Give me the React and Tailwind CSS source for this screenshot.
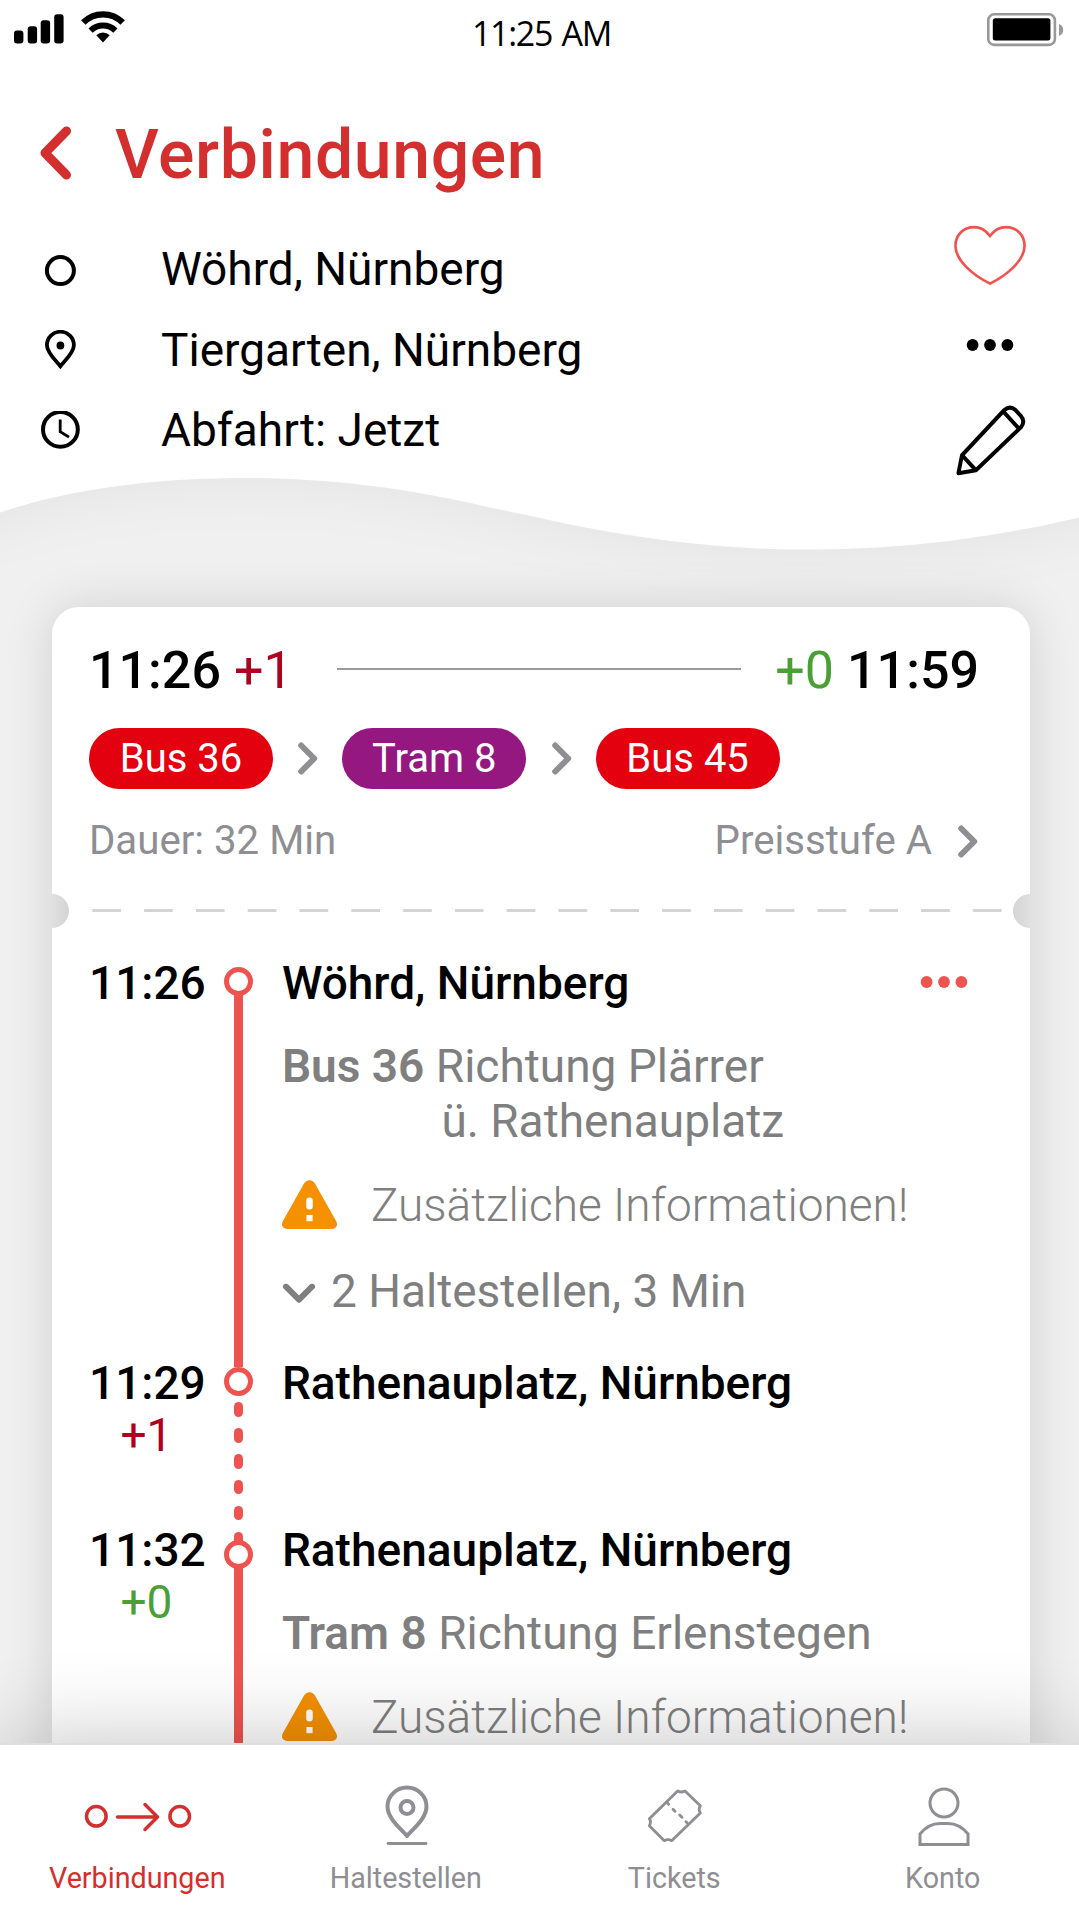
import React from 'react';

const TRIP_ROWS = [
    { id: 'from', text: 'Wöhrd, Nürnberg' },
    { id: 'to', text: 'Tiergarten, Nürnberg' },
    { id: 'time', text: 'Abfahrt: Jetzt' },
];

const LINES = [
    { name: 'Bus 36', color: 'bg-[#e3000f]' },
    { name: 'Tram 8', color: 'bg-[#951881]' },
    { name: 'Bus 45', color: 'bg-[#e3000f]' },
];

const SignalIcon = () => (
    <svg width="50" height="30" viewBox="0 0 50 30">
        <rect x="0" y="16.5" width="9.4" height="13" rx="3" />
        <rect x="13.7" y="12.3" width="9.4" height="17.2" rx="3" />
        <rect x="26.7" y="6.2" width="9.4" height="23.3" rx="3" />
        <rect x="40.2" y="0.3" width="9.4" height="29.2" rx="3" />
    </svg>
);

const WifiIcon = () => (
    <svg width="44" height="32" viewBox="0 0 44 32" fill="none" stroke="#000">
        <path d="M2.3 11.6a27.6 27.6 0 0 1 39.4 0" strokeWidth="6.4" />
        <path d="M9.6 19.6a17.6 17.6 0 0 1 24.8 0" strokeWidth="6" />
        <path d="M22 31.6l-6.7-7.3a9.4 9.4 0 0 1 13.4 0z" fill="#000" stroke="none" />
    </svg>
);

const BatteryIcon = () => (
    <svg width="77" height="34" viewBox="0 0 77 34">
        <rect x="1.3" y="1.3" width="66.6" height="30.6" rx="6" fill="none" stroke="#999" strokeWidth="2.6" />
        <rect x="5.8" y="5.2" width="57.6" height="22.2" rx="2.5" />
        <path d="M72 11c5.6 1.6 5.6 10.4 0 12z" fill="#999" />
    </svg>
);

const TripIcon = ({ id }) => (
    <svg width="40" height="40" viewBox="0 0 40 40" fill="none" stroke="#000" strokeWidth="4">
        {id === 'from' && <circle cx="20.4" cy="20.6" r="13.5" />}
        {id === 'to' && (
            <>
                <path d="M20.4 36.2C16.4 31.2 6.9 22.7 6.9 15.2a13.5 13.5 0 0 1 27 0c0 7.5-9.5 16-13.5 21z" strokeWidth="3.8" />
                <circle cx="20.4" cy="15.5" r="3.9" fill="#000" stroke="none" />
            </>
        )}
        {id === 'time' && (
            <>
                <circle cx="20.4" cy="18.4" r="17.4" />
                <path d="M20.2 8.600v12l8.800 5.500" strokeWidth="2.8" />
            </>
        )}
    </svg>
);

const HeartIcon = () => (
    <svg width="72" height="60" viewBox="0 0 74 60" preserveAspectRatio="none" fill="none" stroke="#f5504e" strokeWidth="2.7">
        <path d="M37 11C32.500 5 27 2.100 20.500 2.100 9.500 2.100 1.500 10.200 1.500 20.800 1.500 35.300 19 49.800 37 58.600 55 49.800 72.500 35.300 72.500 20.800 72.500 10.200 64.500 2.100 53.500 2.100 47 2.100 41.500 5 37 11z" />
    </svg>
);

const Dots = ({ className }) => (
    <svg className={className} width="48" height="14" viewBox="0 0 48 14" fill="currentColor">
        <circle cx="6.6" cy="7" r="5.9" />
        <circle cx="24" cy="7" r="5.9" />
        <circle cx="41.4" cy="7" r="5.9" />
    </svg>
);

const PencilIcon = () => (
    <svg width="71" height="71" viewBox="0 0 73 70" preserveAspectRatio="none" fill="none" stroke="#000" strokeWidth="4" strokeLinejoin="round">
        <path d="M3.500 67.300l3.700-17.800L50.500 5.200q6-5.400 12 0l5.200 5.500q5 5.500 0 11.300L21.500 64.300z" />
        <path d="M7.200 49.500l14.300 14.800M49.800 6.500L65 22.500" />
    </svg>
);

const Chevron = ({ className }) => (
    <svg className={className} width="20" height="33" viewBox="0 0 20 33" fill="none" stroke="currentColor" strokeWidth="6" strokeLinecap="round" strokeLinejoin="round">
        <path d="M3.200 3.500l13 13-13 13" />
    </svg>
);

const WarningIcon = () => (
    <svg width="55" height="50" viewBox="0 0 55 50">
        <path d="M27.500 0.300q3.600 0 5.600 3.500l21 37.200q2.500 5.200-1.700 7.300-1 .7-3 .7H5.600q-2 0-3-.7-4.200-2.100-1.700-7.300l21-37.200q2-3.500 5.600-3.500z" fill="#f59000" />
        <rect x="24.200" y="17.500" width="6.600" height="12" rx="3.300" fill="#fff" />
        <rect x="24.400" y="35" width="6.200" height="6.200" fill="#fff" />
    </svg>
);

const Header = () => (
    <header className="z-10 h-[476px] shrink-0 bg-white">
        <div className="grid h-[101px] grid-cols-3">
            <div className="flex items-start gap-[17px] pl-[14px] pt-[11px]">
                <div className="pt-[3px]">
                    <SignalIcon />
                </div>
                <WifiIcon />
            </div>
            <div className="pl-1 pt-4 text-center font-['Open_Sans'] text-[34px] leading-[34px] tracking-[-1.3px] [word-spacing:2px]">11:25 AM</div>
            <div className="flex items-start justify-end pr-[15px] pt-[13px]">
                <BatteryIcon />
            </div>
        </div>
        <div className="flex h-[108px] items-center pl-[39px] text-[#d32f2f]">
            <svg width="33" height="54" viewBox="0 0 33 54" className="-mt-1" fill="none" stroke="currentColor" strokeWidth="9" strokeLinecap="round" strokeLinejoin="round">
                <path d="M27.500 5L6 27l21.500 22" />
            </svg>
            <h1 className="ml-[43px] text-[68px] font-medium leading-[68px] tracking-[0.6px]">Verbindungen</h1>
        </div>
        <div className="flex justify-between pl-[40px] pr-[53px]">
            <div className="pt-[20.5px]">
                {TRIP_ROWS.map((row) => (
                    <div key={row.id} className="flex h-[80.5px] items-center">
                        <TripIcon id={row.id} />
                        <span className="ml-[81px] text-[46px]">{row.text}</span>
                    </div>
                ))}
            </div>
            <div className="flex flex-col items-center pt-4">
                <HeartIcon />
                <Dots className="mt-[53px] shrink-0" />
                <div className="mt-[53px]">
                    <PencilIcon />
                </div>
            </div>
        </div>
    </header>
);

const Wave = () => (
    <svg className="block shrink-0 overflow-visible" width="1079" height="75" viewBox="0 -0.5 1079 75">
        <path
            className="drop-shadow-[0_0_30px_rgba(0,0,0,0.06)]"
            d="M-60 -60H1139V20L1079 41C990 62 900 73 806 73 720 73 640 62 570 48 520 37 500 33 490 31 410 12 330 1.500 245 1.500 170 1.500 80 9 0 36L-60 60z"
            fill="#fff"
        />
    </svg>
);

const Summary = () => (
    <div className="px-[37px]">
        <div className="flex h-[121px] items-center pt-[6px] text-[52px]">
            <span className="w-[145px] font-medium">11:26</span>
            <span className="text-[#b00020]">+1</span>
            <div className="-mt-[3px] ml-auto mr-[34px] h-[1.5px] w-[404px] bg-[#9a9a9e]" />
            <span className="text-[#4a9f35]">+0</span>
            <span className="ml-[13px] mr-[14px] font-medium">11:59</span>
        </div>
        <div className="flex items-center">
            {LINES.map((line, i) => (
                <React.Fragment key={line.name}>
                    {i > 0 && <Chevron className="ml-[25.3px] mr-[24px] text-[#8e8e93]" />}
                    <div className={`flex h-[60.5px] w-[184px] items-center justify-center rounded-full pt-px text-[40px] text-white ${line.color}`}>
                        {line.name}
                    </div>
                </React.Fragment>
            ))}
        </div>
        <div className="flex h-[105px] items-center justify-between pt-px text-[40.2px] text-[#8e8e93]">
            <span>Dauer: 32 Min</span>
            <span className="flex items-center pr-[15px]">
                Preisstufe A
                <Chevron className="ml-[26px]" />
            </span>
        </div>
    </div>
);

const Perforation = () => (
    <div className="flex h-[34px] items-center">
        <div className="h-[34px] w-[17px] rounded-r-full bg-linear-to-r from-[#e0e0e0] to-[#d4d4d4]" />
        <svg className="flex-1" height="3" stroke="#d4d4d4" strokeWidth="3" strokeDasharray="28.7 23.1">
            <line x1="23.3" y1="1.5" x2="934" y2="1.5" />
        </svg>
        <div className="h-[34px] w-[17px] rounded-l-full bg-linear-to-l from-[#e0e0e0] to-[#d4d4d4]" />
    </div>
);

const Notice = () => (
    <div className="mt-[31px] flex h-[50px] items-center font-light">
        <WarningIcon />
        <span className="ml-[34px]">Zusätzliche Informationen!</span>
    </div>
);

const Leg = ({ time, delay, delayColor, stop, more, walk, height, shift = '', children }) => (
    <div className={`flex text-[46px] ${height}`}>
        <div className={`w-[135.2px] shrink-0 ${shift}`}>
            <div className="h-[33px] font-medium leading-[33px]">{time}</div>
            {delay && <div className={`mt-[12px] pl-[31.5px] leading-[46px] ${delayColor}`}>{delay}</div>}
        </div>
        <div className="flex w-[29px] shrink-0 flex-col items-center">
            <div className="size-[29px] shrink-0 rounded-full border-[5.5px] border-[#ef5350] bg-white" />
            {walk ? (
                <div className="flex flex-col gap-[11.4px] pt-1.5">
                    {[...Array(6)].map((_, i) => (
                        <div key={i} className="h-[14.5px] w-[9px] shrink-0 rounded-full bg-[#ef5350]" />
                    ))}
                </div>
            ) : (
                <div className="-mt-px w-[9px] flex-1 bg-[#ef5350]" />
            )}
        </div>
        <div className={`ml-[28.7px] flex-1 text-[#7f7f7f] ${shift}`}>
            <div className="flex h-[33px] items-center justify-between pr-[25px] font-medium text-black">
                {stop}
                {more && <Dots className="-mt-[4px] text-[#ef5350]" />}
            </div>
            {children}
        </div>
    </div>
);

const ConnectionCard = () => (
    <section className="ml-[52px] mt-[56px] h-[1137px] w-[978px] rounded-t-[27px] bg-white shadow-[0_0_50px_rgba(0,0,0,0.13)]">
        <Summary />
        <Perforation />
        <div className="px-[37px] pt-[39.5px]">
            <Leg time="11:26" stop="Wöhrd, Nürnberg" more height="h-[400.3px]">
                <div className="mt-[39px] leading-[55px]">
                    <p>
                        <b className="font-semibold">Bus 36</b> Richtung Plärrer
                    </p>
                    <p className="pl-[159.5px]">ü. Rathenauplatz</p>
                </div>
                <Notice />
                <div className="mt-[36px] flex h-[50px] items-center">
                    <Chevron className="ml-[7px] mr-[22px] mt-1 rotate-90" />
                    <span>2 Haltestellen, 3 Min</span>
                </div>
            </Leg>
            <Leg time="11:29" delay="+1" delayColor="text-[#b00020]" stop="Rathenauplatz, Nürnberg" walk height="h-[172.6px]" />
            <Leg time="11:32" delay="+0" delayColor="text-[#4a9f35]" stop="Rathenauplatz, Nürnberg" height="h-[203px]" shift="-mt-[5.5px]">
                <p className="mt-[39px] leading-[55px]">
                    <b className="font-semibold">Tram 8</b> Richtung Erlenstegen
                </p>
                <Notice />
            </Leg>
        </div>
    </section>
);

const NAV_ITEMS = [
    {
        label: 'Verbindungen',
        color: 'text-[#d32f2f]',
        icon: (
            <svg width="108" height="62" viewBox="0 0 108 62" className="ml-0.5" fill="none" stroke="currentColor" strokeWidth="3.5" strokeLinecap="round" strokeLinejoin="round">
                <circle cx="12.3" cy="31.3" r="9.8" />
                <circle cx="95.7" cy="31.3" r="9.8" />
                <path d="M33.500 32h40M61 19.500L73.500 32 61 44.500" />
            </svg>
        ),
    },
    {
        label: 'Haltestellen',
        color: 'text-[#8e8e93]',
        icon: (
            <svg width="44" height="62" viewBox="0 0 44 62" className="ml-[3px]" fill="none" stroke="currentColor" strokeWidth="4" strokeLinecap="round">
                <path d="M22 51C17 44.500 2.500 34 2.500 21.500a19.500 19 0 0 1 39 0C41.500 34 27 44.500 22 51z" strokeLinejoin="round" />
                <circle cx="22" cy="22.5" r="6.5" />
                <path d="M3 58.500h38" strokeWidth="2.8" />
            </svg>
        ),
    },
    {
        label: 'Tickets',
        color: 'text-[#8e8e93]',
        icon: (
            <svg width="54" height="54" viewBox="50 54 162 162" className="ml-[2px]" fill="none" stroke="currentColor" strokeWidth="8.5" strokeLinecap="round" strokeLinejoin="round">
                <path d="M139 60Q150 66 161 60L207 104Q200 115 207 126L121 209Q110 203 99 209L54 164Q61 153 54 143z" />
                <path d="M109 97l3 3M125 115l6 6M145 132l7 7M164 152l3 3" />
            </svg>
        ),
    },
    {
        label: 'Konto',
        color: 'text-[#8e8e93]',
        icon: (
            <svg width="52" height="62" viewBox="0 0 52 62" className="ml-[2px]" fill="none" stroke="currentColor" strokeWidth="3">
                <circle cx="26" cy="18" r="14" />
                <path d="M2 59.500V49C8 41.500 15 38.500 22 38.500h8c7 0 14 3 20 10.500v10.500z" />
            </svg>
        ),
    },
];

const BottomNav = () => (
    <nav className="z-10 grid h-[177px] shrink-0 grid-cols-4 border-t-2 border-[#dedede] bg-white pl-[3px] pr-[2px] shadow-[0_0_90px_rgba(0,0,0,0.24)]">
        {NAV_ITEMS.map((item) => (
            <div key={item.label} className={`flex flex-col items-center pt-[40px] ${item.color}`}>
                <div className="flex h-[62px] items-center">{item.icon}</div>
                <span className="mt-4 text-[28.7px] leading-[30px]">{item.label}</span>
            </div>
        ))}
    </nav>
);

const App = () => (
    <div className="flex h-[1920px] w-[1079px] flex-col overflow-hidden bg-[#f0f0f0] font-['Roboto',sans-serif] text-black">
        <Header />
        <Wave />
        <main className="min-h-0 flex-1">
            <ConnectionCard />
        </main>
        <BottomNav />
    </div>
);

export default App;
